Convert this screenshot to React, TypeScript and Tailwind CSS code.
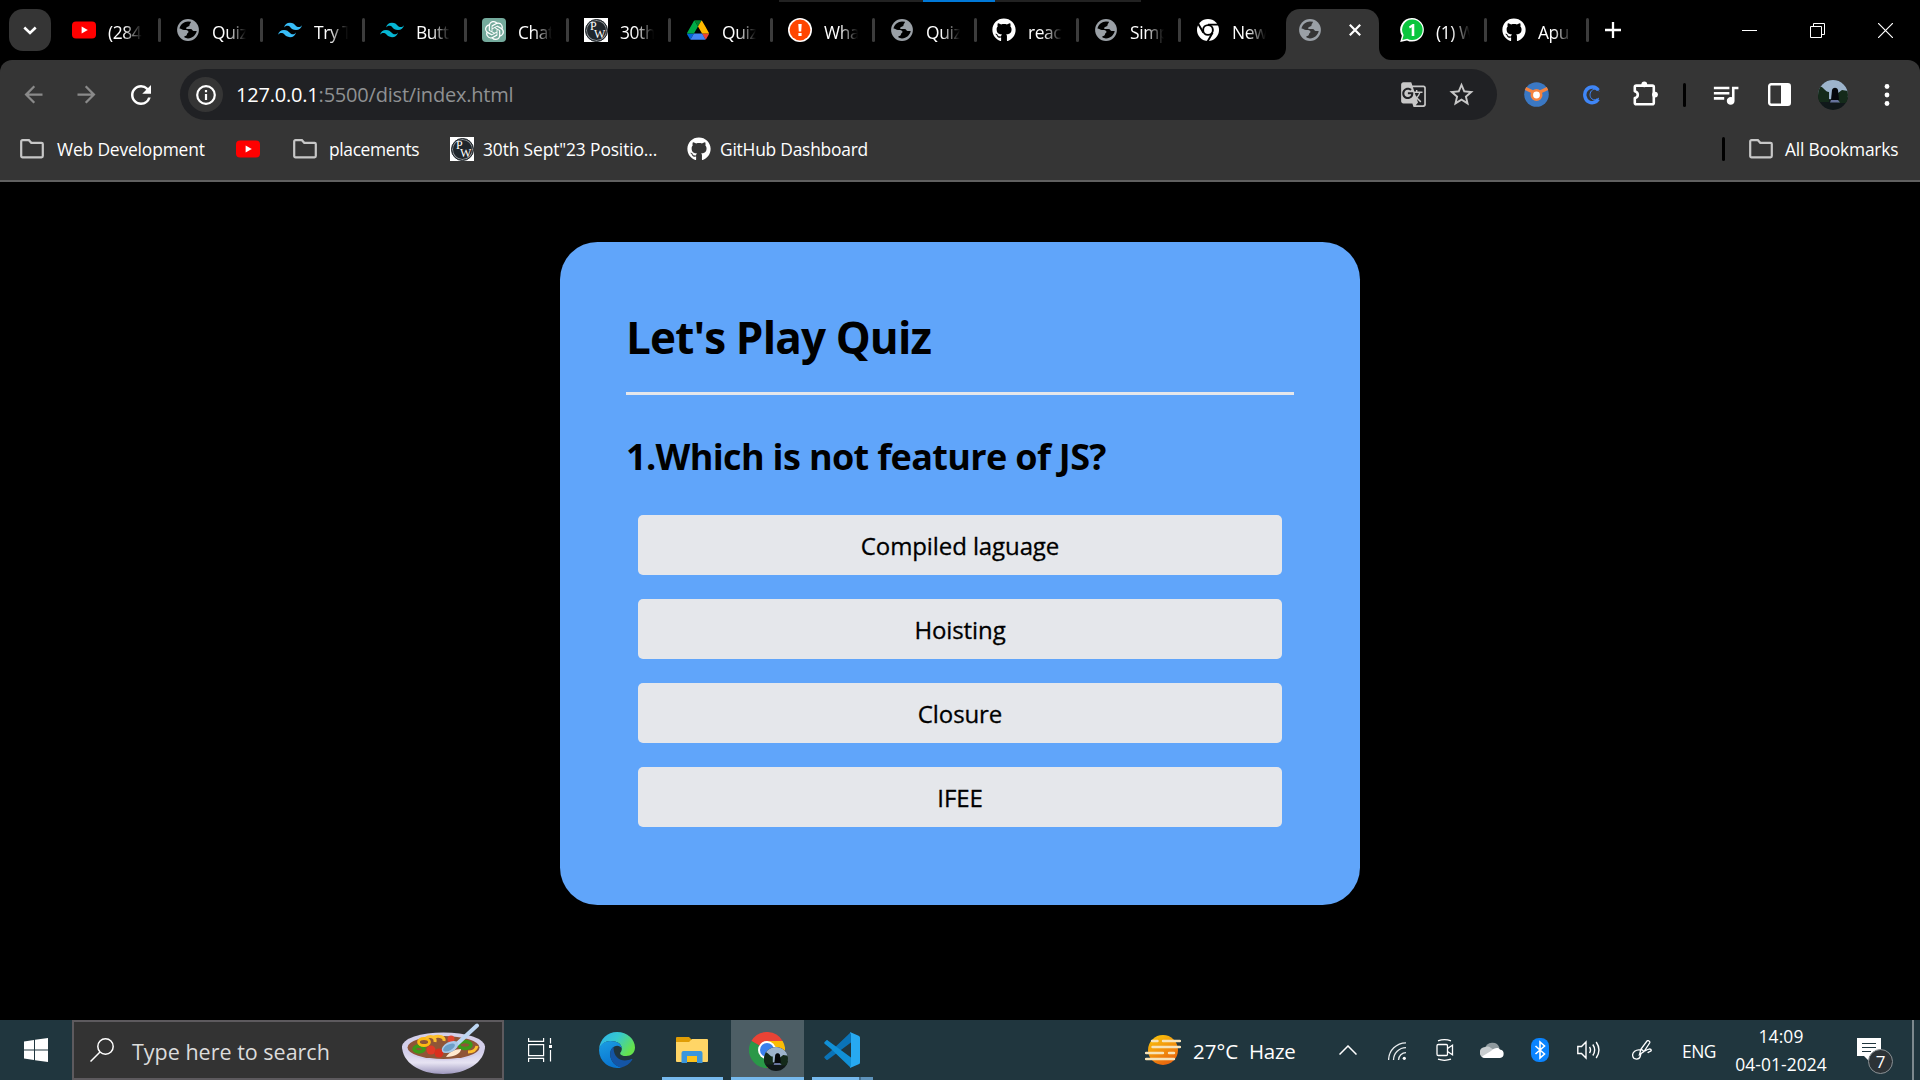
import React from "react";
import type { ReactNode } from "react";
import { FaGithub } from "react-icons/fa";
import { SiOpenai, SiTailwindcss } from "react-icons/si";
import { MdArrowBack, MdArrowForward, MdGTranslate, MdQueueMusic, MdRefresh, MdStarBorder } from "react-icons/md";

function YouTube() {
  return (
    <svg viewBox="0 0 24 24" className="size-6 shrink-0">
      <rect x="0" y="3.6" width="24" height="16.8" rx="4" fill="#ff0000" />
      <path d="M9.6 8.4v7.2l6.2-3.6z" fill="#fff" />
    </svg>
  );
}

function Globe() {
  return (
    <svg viewBox="0 0 24 24" className="size-6 shrink-0">
      <circle cx="12" cy="12" r="10.9" fill="#9aa0a6" />
      <path
        d="M15 3.700C14.800 5.500 13.500 5.500 13.500 7.200c0 1.200-1.500 1.200-2.500 1.700-1.500.8-1 2.100.5 2.100h3c2 0 1.800 2 3.200 2h3C20 17 16.500 20.400 12 20.400c-1.500 0-2.500-.3-3.500-.8v-1.500c1.500 0 2.500-.5 2.500-2 0-1 1.500-1 1.500-2s-1-2-2.500-2H8C6 12 5.500 10.500 3.500 10.500 4.300 6.500 8 3.500 12 3.500z"
        className="fill-current"
      />
    </svg>
  );
}

function PwLogo() {
  return (
    <span className="relative flex size-6 shrink-0 items-center justify-center bg-white">
      <span className="size-[23px] rounded-full border border-[#20262b] bg-[#20262b] ring-1 ring-inset ring-[#8d9296]" />
      <span className="absolute left-[6px] top-[2px] font-['Liberation_Serif'] text-[12px] leading-[12px] text-white">P</span>
      <span className="absolute left-[10px] top-[10px] font-['Liberation_Serif'] text-[12px] leading-[12px] text-white">W</span>
    </span>
  );
}

function Drive() {
  return (
    <svg viewBox="0 0 87.3 78" className="size-[22px] shrink-0">
      <path d="m6.600 66.850 3.850 6.650c.8 1.400 1.950 2.500 3.300 3.300l13.750-23.800h-27.500c0 1.550.4 3.100 1.200 4.500z" fill="#0066da" />
      <path d="m43.650 25-13.750-23.800c-1.350.8-2.500 1.900-3.300 3.300l-25.400 44a9.060 9.060 0 0 0 -1.200 4.500h27.500z" fill="#00ac47" />
      <path d="m73.550 76.800c1.350-.8 2.500-1.900 3.300-3.300l1.600-2.750 7.650-13.250c.8-1.400 1.200-2.950 1.200-4.500h-27.502l5.852 11.500z" fill="#ea4335" />
      <path d="m43.650 25 13.750-23.800c-1.350-.8-2.900-1.200-4.500-1.200h-18.500c-1.600 0-3.150.45-4.500 1.200z" fill="#00832d" />
      <path d="m59.800 53h-32.300l-13.750 23.800c1.350.8 2.900 1.200 4.500 1.200h50.800c1.600 0 3.150-.45 4.500-1.200z" fill="#4285f4" />
      <path d="m73.400 26.500-12.700-22c-.8-1.400-1.950-2.500-3.300-3.300l-13.750 23.800 16.150 28h27.450c0-1.550-.4-3.100-1.200-4.500z" fill="#ffba00" />
    </svg>
  );
}

function Alert() {
  return (
    <svg viewBox="0 0 24 24" className="size-6 shrink-0">
      <circle cx="12" cy="12" r="12" fill="#fff" />
      <circle cx="12" cy="12" r="10.400" fill="#ff4500" />
      <path d="M10.300 6h3.400l-.5 7.500h-2.400zM10.400 15h3.200v3h-3.200z" fill="#fff" />
    </svg>
  );
}

function ChromeMono() {
  return (
    <svg viewBox="0 0 24 24" className="size-6 shrink-0">
      <circle cx="12" cy="12" r="11" fill="#fff" />
      <circle cx="12" cy="12" r="4.900" fill="none" stroke="#000" strokeWidth="1.900" />
      <path d="M12 6.600h11M7.400 14.700 2.200 5.700M16.600 14.700l-5.300 9.200" stroke="#000" strokeWidth="1.900" />
    </svg>
  );
}

function WhatsApp() {
  return (
    <svg viewBox="0 0 24 24" className="size-6 shrink-0">
      <path d="M12.200 0A11.700 11.800 0 1 1 7 22.400L.2 24l1.700-6.300A11.700 11.700 0 0 1 12.200 0z" fill="#fff" />
      <path d="M12.300 1.500a10.300 10.300 0 1 1-5 19.300L2.300 22l1.300-4.900A10.300 10.300 0 0 1 12.300 1.500z" fill="#0ac63e" />
      <path d="M9 8.600 12.600 6h1.700v12h-2.600V9.200L9.800 10.500z" fill="#fff" />
    </svg>
  );
}

function Folder() {
  return (
    <svg viewBox="0 0 24 24" className="size-6 shrink-0" fill="none" stroke="#c7c7c7" strokeWidth="2.200">
      <path d="M1.200 4.500a1.300 1.300 0 0 1 1.300-1.300h6.400l2.400 2.600h10.200a1.300 1.300 0 0 1 1.300 1.300v11.900a1.300 1.300 0 0 1-1.300 1.300H2.500a1.300 1.300 0 0 1-1.300-1.300z" />
    </svg>
  );
}

function Puzzle() {
  return (
    <svg viewBox="0 0 25 25" className="size-[25px]">
      <path
        d="M3.300 4.600h16a1.500 1.500 0 0 1 1.500 1.500v15.600a1.500 1.500 0 0 1-1.500 1.500h-16a1.500 1.500 0 0 1-1.500-1.500v-4.600c4-.8 4-6 0-6.900V6.100a1.500 1.500 0 0 1 1.500-1.500z"
        fill="none"
        stroke="#fff"
        strokeWidth="2.600"
        strokeLinejoin="round"
      />
      <circle cx="11.300" cy="3.300" r="2.900" fill="#fff" />
      <circle cx="22" cy="13.600" r="2.900" fill="#fff" />
    </svg>
  );
}

type TabData = { icon: ReactNode; label: string; sep?: boolean };

const tabs: TabData[] = [
  { icon: <Globe />, label: "Quiz" },
  { icon: <SiTailwindcss className="size-6 text-[#38bdf8]" />, label: "Try T" },
  { icon: <SiTailwindcss className="size-6 text-[#06b6d4]" />, label: "Butto" },
  {
    icon: (
      <span className="flex size-6 items-center justify-center rounded-[4px] bg-[#74aa9c]">
        <SiOpenai className="size-[19px] text-white" />
      </span>
    ),
    label: "Chat",
  },
  { icon: <PwLogo />, label: "30th" },
  { icon: <Drive />, label: "Quiz" },
  { icon: <Alert />, label: "What" },
  { icon: <Globe />, label: "Quiz" },
  { icon: <FaGithub className="size-6 text-white" />, label: "react" },
  { icon: <Globe />, label: "Simp" },
  { icon: <ChromeMono />, label: "New", sep: false },
];

const tabsAfter: TabData[] = [
  { icon: <WhatsApp />, label: "(1) W" },
  { icon: <FaGithub className="size-6 text-white" />, label: "Apu" },
];

function Tab({ icon, label, sep = true }: TabData) {
  return (
    <div className="flex h-full w-[102px] shrink-0 items-center pl-3">
      <span className="flex w-6 shrink-0 justify-center text-black">{icon}</span>
      <span className="ml-3 mt-[3px] w-[34px] overflow-hidden whitespace-nowrap text-[17.400px] leading-6 tracking-[-0.400px] text-white [mask-image:linear-gradient(to_right,#000_45%,transparent)]">
        {label}
      </span>
      {sep && <span className="ml-[14px] h-6 w-[3px] rounded-full bg-[#3c3c3c]" />}
    </div>
  );
}

function TabStrip() {
  return (
    <div className="relative flex h-[60px] shrink-0 items-center bg-black">
      <div className="absolute left-[779px] top-0 flex h-[2px] w-[362px] bg-[#222]">
        <span className="ml-[144px] h-full w-[72px] bg-[#0078d7]" />
      </div>
      <div className="ml-[9px] mr-[9px] flex size-[42px] items-center justify-center rounded-[14px] bg-[#353535]">
        <svg viewBox="0 0 14 9" className="h-[9px] w-[14px]" fill="none" stroke="#fff" strokeWidth="2.600">
          <path d="m1.300 1.500 5.700 5.400 5.700-5.400" />
        </svg>
      </div>
      <Tab icon={<YouTube />} label="(284)" sep={false} />
      <span className="-ml-1 mr-[3px] h-6 w-[3px] rounded-full bg-[#3c3c3c]" />
      {tabs.map((t, i) => (
        <Tab key={i} {...t} />
      ))}
      <div className="relative mr-[9px] h-full w-[93px] shrink-0 pt-[9px]">
        <svg viewBox="0 0 12 12" className="absolute -left-3 bottom-0 size-3">
          <path d="M12 0v12H0A12 12 0 0 0 12 0z" fill="#353535" />
        </svg>
        <svg viewBox="0 0 12 12" className="absolute -right-3 bottom-0 size-3">
          <path d="M0 0v12h12A12 12 0 0 1 0 0z" fill="#353535" />
        </svg>
        <div className="flex h-full items-start justify-between rounded-t-[14px] bg-[#353535] pl-3 pr-[18px] pt-[9px] text-[#353535]">
          <Globe />
          <svg viewBox="0 0 12 12" className="mt-[6px] size-3" stroke="#fff" strokeWidth="2.200">
            <path d="m.8.8 10.400 10.400M11.200.8.8 11.200" />
          </svg>
        </div>
      </div>
      {tabsAfter.map((t, i) => (
        <Tab key={i} {...t} />
      ))}
      <svg viewBox="0 0 16 16" className="ml-[13px] size-4" stroke="#fff" strokeWidth="2.300">
        <path d="M8 0v16M0 8h16" />
      </svg>
      <div className="ml-auto mr-[27px] flex items-center gap-[53px]">
        <span className="h-px w-[15px] bg-white" />
        <svg viewBox="0 0 15 15" className="size-[15px]" fill="none" stroke="#fff">
          <path d="M.5 3.500h11v11H.5zM3.500 3.500v-3h11v11h-3" />
        </svg>
        <svg viewBox="0 0 15 15" className="size-[15px]" stroke="#fff" strokeWidth="1.200">
          <path d="m0 0 15 15M15 0 0 15" />
        </svg>
      </div>
    </div>
  );
}

function Avatar() {
  return (
    <svg viewBox="0 0 30 30" className="size-full rounded-full">
      <rect width="30" height="30" fill="#10181a" />
      <path d="M0 0h30v17l-8 3-12-1-10-4z" fill="#9db4cc" />
      <path d="M0 8c2-3 4-1 6 1s3 3 5 3v10H0zM20 13l4-3 6 1v12H19z" fill="#142a1a" />
      <path d="M14 10c1-3 5-3 6 0l1 10h-8z" fill="#05070a" />
      <path d="M13 20h7l2 2.500H12z" fill="#66739c" />
    </svg>
  );
}

function Toolbar() {
  return (
    <div className="flex h-[69px] shrink-0 items-center">
      <MdArrowBack className="ml-5 size-[27px] text-[#8a8a8a]" />
      <MdArrowForward className="ml-[26px] size-[27px] text-[#8a8a8a]" />
      <MdRefresh className="ml-[26px] size-[30px] text-white" />
      <div className="ml-[24px] flex h-[51px] w-[1317px] shrink-0 items-center rounded-full bg-[#202124]">
        <span className="ml-2 flex size-[35px] items-center justify-center rounded-full bg-[#353535]">
          <svg viewBox="0 0 20 20" className="size-5">
            <circle cx="10" cy="10" r="8.800" fill="none" stroke="#fff" strokeWidth="2.200" />
            <path d="M8.900 9h2.200v6H8.900zM8.900 5h2.200v2.200H8.900z" fill="#fff" />
          </svg>
        </span>
        <span className="ml-[13px] whitespace-nowrap text-[20px] leading-7 tracking-[-0.200px] text-[#8f9193]">
          <span className="text-white">127.0.0.1</span>:5500/dist/index.html
        </span>
        <MdGTranslate className="ml-auto size-[27px] text-[#c7c7c7]" />
        <MdStarBorder className="ml-[20px] mr-[21px] size-[29px] text-[#c7c7c7]" />
      </div>
      <svg viewBox="0 0 25 25" className="ml-[27px] size-[25px]">
        <circle cx="12.500" cy="12.500" r="12.300" fill="#3b78c3" />
        <path d="M1.500 6.500 10 10.500M23.500 6.500 15 10.500" stroke="#f5833f" strokeWidth="3.200" />
        <circle cx="12.500" cy="13" r="4.700" fill="#fff" stroke="#f5833f" strokeWidth="2.600" />
      </svg>
      <svg viewBox="0 0 18 20" className="ml-[33px] h-5 w-[18px]" fill="none" stroke="#3f86f7">
        <path d="M16.300 5.200C14 1.200 8 .8 4.700 4.500 1.300 8.300 2.600 15 7 17c3.500 1.600 7.300.3 9.300-2.700" strokeWidth="3.400" />
        <path d="M17 6.300C14.500 3 11 4 9.300 6c-2 2.500-1.600 6.300.7 8 2 1.500 4.700 1.100 7-1" strokeWidth="1" />
      </svg>
      <span className="mb-[3px] ml-[33px]"><Puzzle /></span>
      <span className="ml-[25px] h-6 w-[3px] rounded-full bg-black" />
      <MdQueueMusic className="ml-[24px] size-[31px] text-white" />
      <svg viewBox="0 0 23 23" className="ml-[27px] size-[23px]">
        <rect x="1.200" y="1.200" width="20.600" height="20.600" rx="2" fill="none" stroke="#fff" strokeWidth="2.400" />
        <path d="M13 1h9v21h-9z" fill="#fff" />
      </svg>
      <span className="ml-[27px] size-[30px]">
        <Avatar />
      </span>
      <svg viewBox="0 0 6 24" className="ml-[36px] h-6 w-[6px]" fill="#fff">
        <circle cx="3" cy="3.500" r="2.400" />
        <circle cx="3" cy="12" r="2.400" />
        <circle cx="3" cy="20.500" r="2.400" />
      </svg>
    </div>
  );
}

function Bookmarks() {
  return (
    <div className="flex h-[51px] shrink-0 items-center pb-[11px] text-[17.400px] leading-6 tracking-[-0.150px] text-white">
      <span className="ml-[20px]"><Folder /></span>
      <span className="ml-[13px] w-[148px] whitespace-nowrap">Web Development</span>
      <span className="ml-[31px]"><YouTube /></span>
      <span className="ml-[33px]"><Folder /></span>
      <span className="ml-3 w-[91px] whitespace-nowrap tracking-[-0.350px]">placements</span>
      <span className="ml-[30px]"><PwLogo /></span>
      <span className="ml-[9px] w-[174px] whitespace-nowrap tracking-[-0.130px]">30th Sept"23 Positio...</span>
      <FaGithub className="ml-[30px] size-6" />
      <span className="ml-[9px] w-[148px] whitespace-nowrap tracking-[-0.230px]">GitHub Dashboard</span>
      <span className="ml-auto h-6 w-[3px] rounded-full bg-black" />
      <span className="ml-[24px]"><Folder /></span>
      <span className="ml-3 mr-[22px] w-[113px] whitespace-nowrap tracking-[-0.200px]">All Bookmarks</span>
    </div>
  );
}

const options = ["Compiled laguage", "Hoisting", "Closure", "IFEE"];

function Quiz() {
  return (
    <main className="flex flex-1 justify-center bg-black pt-[60px]">
      <section className="h-[663px] w-[800px] rounded-[37.500px] bg-[#60a5fa] px-[66px] pt-[65px] text-black">
        <h1 className="flex h-[88px] items-start border-b-[3px] border-gray-200 text-[44px] font-bold leading-[60px] tracking-[-0.850px]">
          Let's Play Quiz
        </h1>
        <h2 className="mt-[37px] whitespace-nowrap text-[36px] font-bold leading-[50px] tracking-[-0.650px]">
          1.Which is not feature of JS?
        </h2>
        <div className="mx-3 mt-[33px] flex flex-col gap-6">
          {options.map((o) => (
            <button
              key={o}
              className="h-[60px] rounded-[5px] bg-gray-200 pt-[2px] text-[24px] font-medium tracking-[-0.100px] [-webkit-text-stroke:0.300px_#000]"
            >
              {o}
            </button>
          ))}
        </div>
      </section>
    </main>
  );
}

function Bowl() {
  return (
    <svg viewBox="0 0 84 52" className="h-[52px] w-[84px]">
      <defs>
        <linearGradient id="bowl" x1="0" y1="0" x2="0" y2="1">
          <stop offset="0" stopColor="#c9c4e6" />
          <stop offset=".6" stopColor="#e6e3f2" />
          <stop offset="1" stopColor="#9d97bd" />
        </linearGradient>
      </defs>
      <path d="M0 23c0 16 17 28 41 28s42-12 42-28z" fill="url(#bowl)" />
      <ellipse cx="41.500" cy="23.500" rx="41.500" ry="14" fill="#d3cfea" />
      <ellipse cx="41.500" cy="24.500" rx="36" ry="11.500" fill="#8f5537" />
      <ellipse cx="17" cy="26" rx="5" ry="3" fill="none" stroke="#3c9a19" strokeWidth="3.500" />
      <ellipse cx="63" cy="22" rx="6" ry="3.500" fill="none" stroke="#3c9a19" strokeWidth="3.500" />
      <ellipse cx="22" cy="19" rx="5.500" ry="3.500" fill="none" stroke="#fdb913" strokeWidth="2.800" />
      <path d="M24 15c5-3 10-1 9 4M32 14c5-2 11 0 10 4M66 29c5 0 8-2 9-6" fill="none" stroke="#fdbf2d" strokeWidth="3" />
      <circle cx="29" cy="27" r="4.500" fill="#e03a27" />
      <circle cx="37" cy="30" r="4.500" fill="#d8301f" />
      <circle cx="49" cy="16" r="3.500" fill="#e2452f" />
      <path d="M44 34c3-5 9-8 15-8 0 4-6 8-15 8z" fill="#ffe9cf" />
      <path d="m55 21 20-18.500" stroke="#bdd6f2" strokeWidth="4" strokeLinecap="round" />
      <ellipse cx="48" cy="24" rx="9" ry="5" transform="rotate(-28 48 24)" fill="#a9c9ea" />
      <ellipse cx="47" cy="24.500" rx="6.500" ry="3" transform="rotate(-28 47 24.500)" fill="#6d9fc6" />
    </svg>
  );
}

function Edge() {
  return (
    <svg viewBox="0 0 36 36" className="size-9">
      <defs>
        <linearGradient id="edgeTop" x1="0" y1="0" x2="1" y2=".5">
          <stop offset="0" stopColor="#2bb0ee" />
          <stop offset=".5" stopColor="#36c8cf" />
          <stop offset="1" stopColor="#65e24d" />
        </linearGradient>
        <linearGradient id="edgeSide" x1="0" y1="0" x2=".3" y2="1">
          <stop offset="0" stopColor="#1b9de2" />
          <stop offset="1" stopColor="#0a76d1" />
        </linearGradient>
      </defs>
      <path d="M0 17C1 7 8.500 0 18 0c10.500 0 18 7.500 18 15.500 0 5-3.800 8.500-8.800 8.500-3.700 0-6-1.200-6-2.600 0-1.400 1.600-1.600 1.600-5C22.800 12 18 9 12 9 6 9 2 12.500 0 17z" fill="url(#edgeTop)" />
      <path d="M0 18C.5 12.500 5.500 9 11.500 9c6.500 0 11.300 3.200 11.300 7.400-1-1.700-2.800-2.600-4.600-2.600-4.200 0-7 3.700-7 8.400 0 6.800 5 12 11.300 13.200A18 18 0 0 1 0 18z" fill="url(#edgeSide)" />
      <path d="M14.500 15c-2.200 1.500-3.400 4.200-3.300 7.200.1 7 5.300 12.300 11.300 13.200 4.500-1 8.300-3.800 10.800-7.700.3-.6-.3-1-.9-.7-7.500 3.500-17.900 1.200-17.900-12z" fill="#1455a5" />
    </svg>
  );
}

function Explorer() {
  return (
    <svg viewBox="0 0 32 26" className="h-[26px] w-8">
      <path d="M0 1a1 1 0 0 1 1-1h12l3 3v4H0z" fill="#e09d05" />
      <path d="M0 5h13l3-3h15a1 1 0 0 1 1 1v21a1 1 0 0 1-1 1H1a1 1 0 0 1-1-1z" fill="#ffd566" />
      <path d="M5.500 26V16a2 2 0 0 1 2-2h17a2 2 0 0 1 2 2v10h-5.500v-7H11v7z" fill="#3a96dd" />
      <path d="M11 19h10v6H11z" fill="#fcc21b" />
    </svg>
  );
}

function ChromeColor() {
  return (
    <svg viewBox="0 0 36 36" className="size-9">
      <path d="M18 18 2.400 9A18 18 0 0 1 33.600 9z" fill="#ea4335" />
      <path d="M18 18V9h15.600A18 18 0 0 1 18 36z" fill="#fbbc05" />
      <path d="M2.400 9A18 18 0 0 0 18 36l7.800-13.500L18 18z" fill="#2a9848" />
      <circle cx="18" cy="18" r="9" fill="#fff" />
      <circle cx="18" cy="18" r="7" fill="#3a80ee" />
    </svg>
  );
}

function VsCode() {
  return (
    <svg viewBox="0 0 36 36" className="size-9">
      <path d="M27 0 6.500 19.500.6 24.500a1.300 1.300 0 0 0 0 1.600l1.700 1.600c.5.400 1 .4 1.500 0L27 10.500z" fill="#0a73b7" />
      <path d="M27 36 6.500 16.500.6 11.700a1.300 1.300 0 0 1 0-1.700l1.700-1.600c.5-.4 1-.4 1.500 0L27 25.500z" fill="#1190d6" />
      <path d="M26.500 35.800c-.8-.3 0-1.300.5-1.800V2c-.5-.5-1.300-1.500-.5-1.800L34.600 3.700A2 2 0 0 1 36 5.500v25a2 2 0 0 1-1.400 1.800z" fill="#27a9f1" />
    </svg>
  );
}

function Weather() {
  return (
    <svg viewBox="0 0 36 30" className="h-[30px] w-9">
      <defs>
        <linearGradient id="sun" x1="0" y1="0" x2=".5" y2="1">
          <stop offset="0" stopColor="#fccb0a" />
          <stop offset="1" stopColor="#e9690e" />
        </linearGradient>
      </defs>
      <circle cx="18" cy="15" r="15" fill="url(#sun)" />
      <path d="M7 6h5.500M18 6h17M7.500 12H35M1 18h17M24 18h5M1 24h28" stroke="#f7e3b8" strokeWidth="2.400" strokeLinecap="round" />
    </svg>
  );
}

function Taskbar() {
  return (
    <footer className="flex h-[60px] shrink-0 items-center bg-[#20363e] text-white">
      <svg viewBox="0 0 24 24" className="ml-6 size-6" fill="#fff">
        <path d="M0 3.400 10 2v9.400H0zM11 1.800 24 0v11.400H11zM0 12.600h10V22L0 20.600zM11 12.600h13V24l-13-1.800z" />
      </svg>
      <div className="ml-6 flex h-[60px] w-[432px] shrink-0 items-center border-2 border-[#5d5a5e] bg-[#333]">
        <svg viewBox="0 0 24 24" className="ml-4 size-6" fill="none" stroke="#fff" strokeWidth="1.500">
          <circle cx="15.500" cy="8.500" r="7.700" />
          <path d="M10 14 .5 23.500" />
        </svg>
        <span className="ml-[18px] mt-1 w-[200px] whitespace-nowrap text-[21.500px] leading-7 text-[#dcdcdc]">Type here to search</span>
        <span className="-mt-[3px] ml-auto mr-[16px]"><Bowl /></span>
      </div>
      <svg viewBox="0 0 24 24" className="ml-6 size-6" fill="none" stroke="#fff" strokeWidth="1.200">
        <path d="M.6 0v3.400h15V0M.6 6.600h15v11H.6zM.6 24v-3.600h15V24M22.500 0v5.500M22.500 12v11.500" />
        <path d="M21 7h3v3h-3z" fill="#fff" stroke="none" />
      </svg>
      <span className="ml-[47px]"><Edge /></span>
      <div className="ml-[27px] flex h-full w-[61px] flex-col items-center justify-end">
        <span className="mb-[14px] mr-[2px]"><Explorer /></span>
        <span className="h-[3px] w-full bg-[#76b9ed]" />
      </div>
      <div className="relative ml-2 flex h-full w-[73px] flex-col items-center justify-end bg-[#4d5e65]">
        <span className="mb-[9px] mr-px"><ChromeColor /></span>
        <span className="absolute left-[33px] top-[27px] size-6"><Avatar /></span>
        <span className="h-[3px] w-full bg-[#76b9ed]" />
      </div>
      <div className="ml-2 flex h-full w-[61px] flex-col justify-end">
        <span className="mb-[9px] ml-3"><VsCode /></span>
        <span className="flex h-[3px] w-full">
          <span className="w-[47px] bg-[#76b9ed]" />
          <span className="w-[2px] bg-[#456f8e]" />
          <span className="w-3 bg-[#5e93bb]" />
        </span>
      </div>
      <span className="ml-[272px]"><Weather /></span>
      <span className="ml-3 mt-[2px] w-[56px] whitespace-nowrap text-[20.500px] leading-7">27°C</span>
      <span className="mr-px mt-[2px] w-[45px] whitespace-nowrap text-[20.500px] leading-7 tracking-[-0.300px]">Haze</span>
      <svg viewBox="0 0 18 10" className="ml-[44px] h-[10px] w-[18px]" fill="none" stroke="#fff" strokeWidth="1.500">
        <path d="m.5 9.500 8.500-8.500 8.500 8.500" />
      </svg>
      <svg viewBox="0 0 18 18" className="ml-[31px] mt-[2px] size-[18px]" fill="none" stroke="#e8ecee" strokeWidth="1.300">
        <path d="M.6 18A17.400 17.400 0 0 1 18 .8M5.500 18A12.500 12.500 0 0 1 18 5.600M10.500 18A7.500 7.500 0 0 1 18 10.700" />
        <circle cx="16.300" cy="16.300" r="1.600" fill="#fff" stroke="none" />
      </svg>
      <svg viewBox="0 0 18 22" className="ml-[30px] h-[22px] w-[18px]" fill="none" stroke="#fff" strokeWidth="1.300">
        <rect x="1" y="5.500" width="10.500" height="11" rx="1.200" />
        <path d="m11.500 9.500 5-3.200v9.400l-5-3.200M2 1.800Q8.500-.5 15 1.800M2 20.200q6.500 2.300 13 0" />
      </svg>
      <svg viewBox="0 0 24 16" className="ml-[26px] h-4 w-6">
        <path d="M5 7a7.500 7.500 0 0 1 14.500-1l-4 6H5z" fill="#8f9a9e" />
        <path d="M5 5a6 6 0 0 1 6 1l6 4-8 6H5A5.300 5.500 0 0 1 5 5z" fill="#c8cdcf" />
        <path d="M2 14.500 11 9c3-3 7-4 9-1.500a4.300 4.300 0 0 1 0 8.500H5c-1.500 0-2.500-.8-3-1.500z" fill="#fff" />
      </svg>
      <svg viewBox="0 0 18 24" className="ml-[27px] h-6 w-[18px]">
        <rect width="18" height="24" rx="8" fill="#0a84ff" />
        <path d="m4.500 8 9 8-4.500 4V4l4.500 4-9 8" fill="none" stroke="#fff" strokeWidth="1.600" />
      </svg>
      <svg viewBox="0 0 24 20" className="ml-[28px] h-5 w-6" fill="none" stroke="#fff" strokeWidth="1.400">
        <path d="M.8 6.500h3.700L9 2v16l-4.500-4.500H.8zM12.500 7q2 3 0 6M15.800 4.500q3.700 5.500 0 11M19.200 2q5.500 8 0 16" />
      </svg>
      <svg viewBox="0 0 20 20" className="ml-[31px] size-5" fill="none" stroke="#fff" strokeWidth="1.300">
        <path d="M7.500 14.500 9 9l6-8c1-1 3.500.3 2.600 2L12 11.500zM9 9l3 2.500M8.500 10C4 9 0 12.500.7 16c.6 4 6.500 4 7.500.5l.8-3M13 11c3-2.500 6-2.500 6.300-.8.2 1.800-3 1-3.500 2.800" />
      </svg>
      <span className="ml-[30px] mt-px w-[34px] whitespace-nowrap text-[17.400px] leading-6 tracking-[-0.500px]">ENG</span>
      <div className="ml-[16px] mr-px flex w-[98px] flex-col items-center whitespace-nowrap text-[17.400px] leading-7 tracking-[0.100px]">
        <span>14:09</span>
        <span>04-01-2024</span>
      </div>
      <div className="relative ml-[26px] h-[26px] w-6">
        <svg viewBox="0 0 24 26" className="h-[26px] w-6">
          <path d="M0 1h24v18H12.500l0 5.500L7 19H0z" fill="#fff" />
          <path d="M5 6.500h14M5 10.500h14M5 14.500h9" stroke="#20363e" strokeWidth="1.200" />
        </svg>
        <span className="absolute left-[11px] top-[12px] flex size-[25px] items-center justify-center rounded-full border border-[#8a9195] bg-[#2c3236] text-[17px] font-medium leading-none">
          7
        </span>
      </div>
      <span className="ml-auto mr-[6px] h-full w-[2px] bg-[#7d898e]" />
    </footer>
  );
}

export default function App() {
  return (
    <div className="flex h-[1080px] w-[1920px] flex-col overflow-hidden bg-black font-['Open_Sans','Noto_Sans',sans-serif]">
      <TabStrip />
      <div className="bg-black">
        <div className="flex h-[122px] shrink-0 flex-col rounded-t-[12px] border-b-2 border-[#606060] bg-[#353535]">
          <Toolbar />
          <Bookmarks />
        </div>
      </div>
      <Quiz />
      <Taskbar />
    </div>
  );
}
